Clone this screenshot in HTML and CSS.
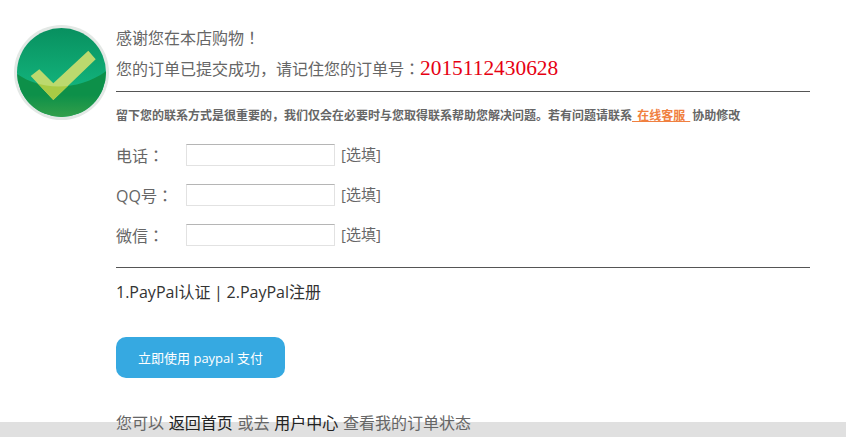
FILE: index.html
```html
<!DOCTYPE html>
<html lang="zh-CN">
<head>
<meta charset="utf-8">
<title>订单提交成功</title>
<link rel="stylesheet" href="styles.css">
</head>
<body>
<div class="bottom-band"></div>
<main class="page">
  <div class="badge">
    <svg width="96" height="96" viewBox="0 0 96 96" aria-hidden="true">
      <defs>
        <linearGradient id="top" x1="0" y1="0" x2="0" y2="1">
          <stop offset="0" stop-color="#08905f"/>
          <stop offset="0.65" stop-color="#12b27b"/>
        </linearGradient>
        <linearGradient id="bot" x1="0" y1="0" x2="0" y2="1">
          <stop offset="0.5" stop-color="#0d9049"/>
          <stop offset="1" stop-color="#3aa24a"/>
        </linearGradient>
        <clipPath id="disc"><circle cx="48.500" cy="47.500" r="44.500"/></clipPath>
        <clipPath id="lower"><path d="M0 46 C25 66 65 68 96 44 V96 H0 Z"/></clipPath>
      </defs>
      <circle cx="48.500" cy="47.500" r="47.500" fill="#e3e8e5"/>
      <circle cx="48.500" cy="47.500" r="44.500" fill="url(#top)"/>
      <path clip-path="url(#disc)" d="M0 46 C25 66 65 68 96 44 V96 H0 Z" fill="url(#bot)"/>
      <path d="M17.700 51 L26.300 44.300 L40.300 58.300 L75.300 25.700 L82.700 34.300 L40.300 75 Z" fill="#bcd96e"/>
      <path clip-path="url(#lower)" d="M17.700 51 L26.300 44.300 L40.300 58.300 L75.300 25.700 L82.700 34.300 L40.300 75 Z" fill="#a8cb45"/>
    </svg>
  </div>
  <div class="content">
    <p class="thanks">感谢您在本店购物！</p>
    <p class="order">您的订单已提交成功，请记住您的订单号：<span class="order-no">2015112430628</span></p>
    <p class="note">留下您的联系方式是很重要的，我们仅会在必要时与您取得联系帮助您解决问题。若有问题请联系<a class="service" href="#"> 在线客服 </a> 协助修改</p>
    <form class="contact">
      <div class="field"><label class="field-label">电话：</label><input class="field-input" type="text"><span class="hint">[选填]</span></div>
      <div class="field"><label class="field-label">QQ号：</label><input class="field-input" type="text"><span class="hint">[选填]</span></div>
      <div class="field"><label class="field-label">微信：</label><input class="field-input" type="text"><span class="hint">[选填]</span></div>
    </form>
    <p class="steps">1.PayPal认证 | 2.PayPal注册</p>
    <a class="pay" href="#">立即使用 paypal 支付</a>
    <p class="after">您可以 <a class="link" href="#">返回首页</a> 或去 <a class="link" href="#">用户中心</a> 查看我的订单状态</p>
  </div>
</main>
</body>
</html>
```
FILE: styles.css
```css
html, body {
  margin: 0;
  padding: 0;
  height: 100%;
  overflow: hidden;
}
body {
  position: relative;
  background: #fff;
  color: #666;
  font-family: "Open Sans", "Noto Sans CJK JP", sans-serif;
  font-feature-settings: "locl" 0;
  font-size: 15px;
}
p { margin: 0; }
a { text-decoration: none; }
.bottom-band {
  position: absolute;
  left: 0;
  right: 0;
  bottom: 0;
  height: 15px;
  background: #e0e0e0;
}
.page {
  position: relative;
  display: flex;
  padding: 25px 36px 0 13px;
}
.badge {
  width: 96px;
  height: 96px;
  margin-right: 7px;
  flex: none;
}
.badge svg { display: block; }
.content { flex: 1; min-width: 0; }
.thanks {
  font-size: 16px;
  line-height: 26px;
}
.order {
  font-size: 16px;
  line-height: 34px;
  height: 40px;
  border-bottom: 1px solid #555;
}
.order-no {
  font-family: "Liberation Serif", serif;
  font-size: 21.4px;
  color: #e60012;
}
.note {
  margin-top: 15px;
  font-size: 12px;
  line-height: 18px;
  font-weight: 700;
  color: #666;
  word-spacing: 2px;
}
.service {
  margin-right: 2px;
  color: #f08040;
  text-decoration: underline;
}
.contact { margin-top: 19px; }
.field {
  display: flex;
  align-items: center;
  height: 22px;
  margin-bottom: 18px;
}
.field-label {
  width: 70px;
  font-size: 16px;
}
.field-input {
  box-sizing: border-box;
  width: 149px;
  height: 22px;
  margin: 0 6px 0 0;
  padding: 0;
  border: 1px solid #e2e2e2;
  border-top-color: #b5b5b5;
  background: #fff;
}
.hint {
  position: relative;
  top: -2px;
  font-size: 15px;
}
.steps {
  margin-top: 21px;
  padding-top: 14px;
  border-top: 1px solid #555;
  font-size: 16px;
  line-height: 20px;
  color: #333;
  word-spacing: -0.5px;
}
.pay {
  display: flex;
  align-items: center;
  justify-content: center;
  width: 169px;
  height: 41px;
  margin-top: 35px;
  border-radius: 10px;
  background: #36a9e1;
  color: #fff;
  font-size: 13px;
}
.after {
  margin-top: 33px;
  font-size: 16px;
  line-height: 24px;
  word-spacing: 0.6px;
}
.link { color: #222; }
```
